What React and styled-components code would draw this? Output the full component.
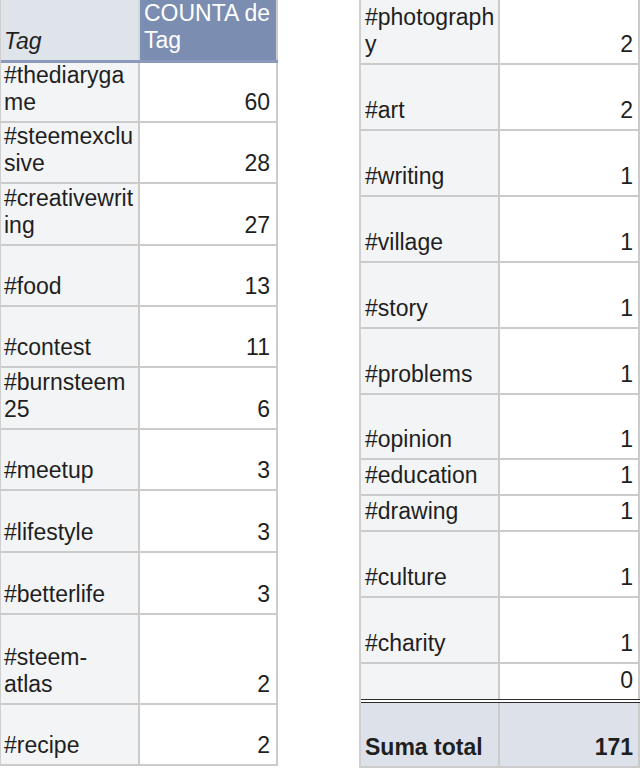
import React from "react";
import styled, { createGlobalStyle } from "styled-components";

const GlobalStyle = createGlobalStyle`
  html, body { margin: 0; padding: 0; background: #ffffff; }
  body { font-family: "Liberation Sans", Arial, sans-serif; }
`;

const Page = styled.div`
  width: 640px;
  height: 768px;
  overflow: hidden;
  display: flex;
  align-items: flex-start;
  justify-content: space-between;
  font-family: "Liberation Sans", Arial, sans-serif;
  font-size: 23px;
  line-height: 27px;
  color: #1f1f1f;
`;

const Pivot = styled.div`
  width: ${(p) => p.$width}px;
  display: flex;
  flex-direction: column;
  border-left: ${(p) => p.$edge}px solid #cfcfcf;
  box-sizing: border-box;
`;

const Row = styled.div`
  display: grid;
  grid-template-columns: ${(p) => p.$tagWidth}px 1fr;
  height: ${(p) => p.$h}px;
  box-sizing: border-box;
  border-bottom: ${(p) => (p.$noBorder ? "0" : "2px solid #cbcbcb")};
`;

const HeaderRow = styled(Row)`
  border-bottom: 3px solid #8b9aba;
`;

const TotalRow = styled(Row)`
  border-top: 4px double #2c2c2c;
  font-weight: bold;
`;

const Cell = styled.div`
  box-sizing: border-box;
  display: flex;
  flex-direction: column;
  justify-content: ${(p) => (p.$top ? "flex-start" : "flex-end")};
  padding: 0 6px 5px 3px;
  border-right: 2px solid #cbcbcb;
  white-space: nowrap;
  overflow: hidden;
`;

const TagCell = styled(Cell)`
  background: ${(p) => (p.$total ? "#dde2ea" : "#f3f4f6")};
  padding-left: ${(p) => p.$pad}px;
`;

const CountCell = styled(Cell)`
  background: ${(p) => (p.$total ? "#dde2ea" : "#ffffff")};
  text-align: right;
  padding-right: ${(p) => p.$pad}px;
`;

const TagHead = styled(Cell)`
  background: #dfe3ea;
  font-style: italic;
  border-right: 2px solid #d3d7de;
`;

const CountHead = styled(Cell)`
  background: #7b8db1;
  color: #ffffff;
  padding: 0 4px 0 4px;
  border-right: 2px solid #cbcbcb;
`;

const Line = styled.span`
  display: block;
`;

const leftRows = [
  { tag: ["#thediaryga", "me"], n: 60, h: 60 },
  { tag: ["#steemexclu", "sive"], n: 28, h: 61 },
  { tag: ["#creativewrit", "ing"], n: 27, h: 62 },
  { tag: ["#food"], n: 13, h: 61 },
  { tag: ["#contest"], n: 11, h: 61 },
  { tag: ["#burnsteem", "25"], n: 6, h: 62 },
  { tag: ["#meetup"], n: 3, h: 61 },
  { tag: ["#lifestyle"], n: 3, h: 62 },
  { tag: ["#betterlife"], n: 3, h: 62 },
  { tag: ["#steem-", "atlas"], n: 2, h: 90 },
  { tag: ["#recipe"], n: 2, h: 61 },
];

const rightRows = [
  { tag: ["#photograph", "y"], n: 2, h: 65 },
  { tag: ["#art"], n: 2, h: 66 },
  { tag: ["#writing"], n: 1, h: 66 },
  { tag: ["#village"], n: 1, h: 66 },
  { tag: ["#story"], n: 1, h: 66 },
  { tag: ["#problems"], n: 1, h: 66 },
  { tag: ["#opinion"], n: 1, h: 65 },
  { tag: ["#education"], n: 1, h: 36 },
  { tag: ["#drawing"], n: 1, h: 36 },
  { tag: ["#culture"], n: 1, h: 66 },
  { tag: ["#charity"], n: 1, h: 66 },
  { tag: [], n: 0, h: 35, last: true },
];

function DataRow({ row, tagWidth, pad }) {
  return (
    <Row $h={row.h} $tagWidth={tagWidth} $noBorder={row.last}>
      <TagCell $pad={pad}>
        {row.tag.map((t) => (
          <Line key={t}>{t}</Line>
        ))}
      </TagCell>
      <CountCell $pad={pad === 3 ? 6 : 5}>{row.n}</CountCell>
    </Row>
  );
}

export default function App() {
  return (
    <>
      <GlobalStyle />
      <Page>
        <Pivot $width={278} $edge={1}>
          <HeaderRow $h={63} $tagWidth={139}>
            <TagHead>Tag</TagHead>
            <CountHead $top>
              <Line>COUNTA de</Line>
              <Line>Tag</Line>
            </CountHead>
          </HeaderRow>
          {leftRows.map((r) => (
            <DataRow key={r.tag.join("")} row={r} tagWidth={139} pad={3} />
          ))}
        </Pivot>
        <Pivot $width={281} $edge={2}>
          {rightRows.map((r, i) => (
            <DataRow key={i} row={r} tagWidth={139} pad={4} />
          ))}
          <TotalRow $h={69} $tagWidth={139}>
            <TagCell $pad={4} $total>
              Suma total
            </TagCell>
            <CountCell $pad={5} $total>
              171
            </CountCell>
          </TotalRow>
        </Pivot>
      </Page>
    </>
  );
}
